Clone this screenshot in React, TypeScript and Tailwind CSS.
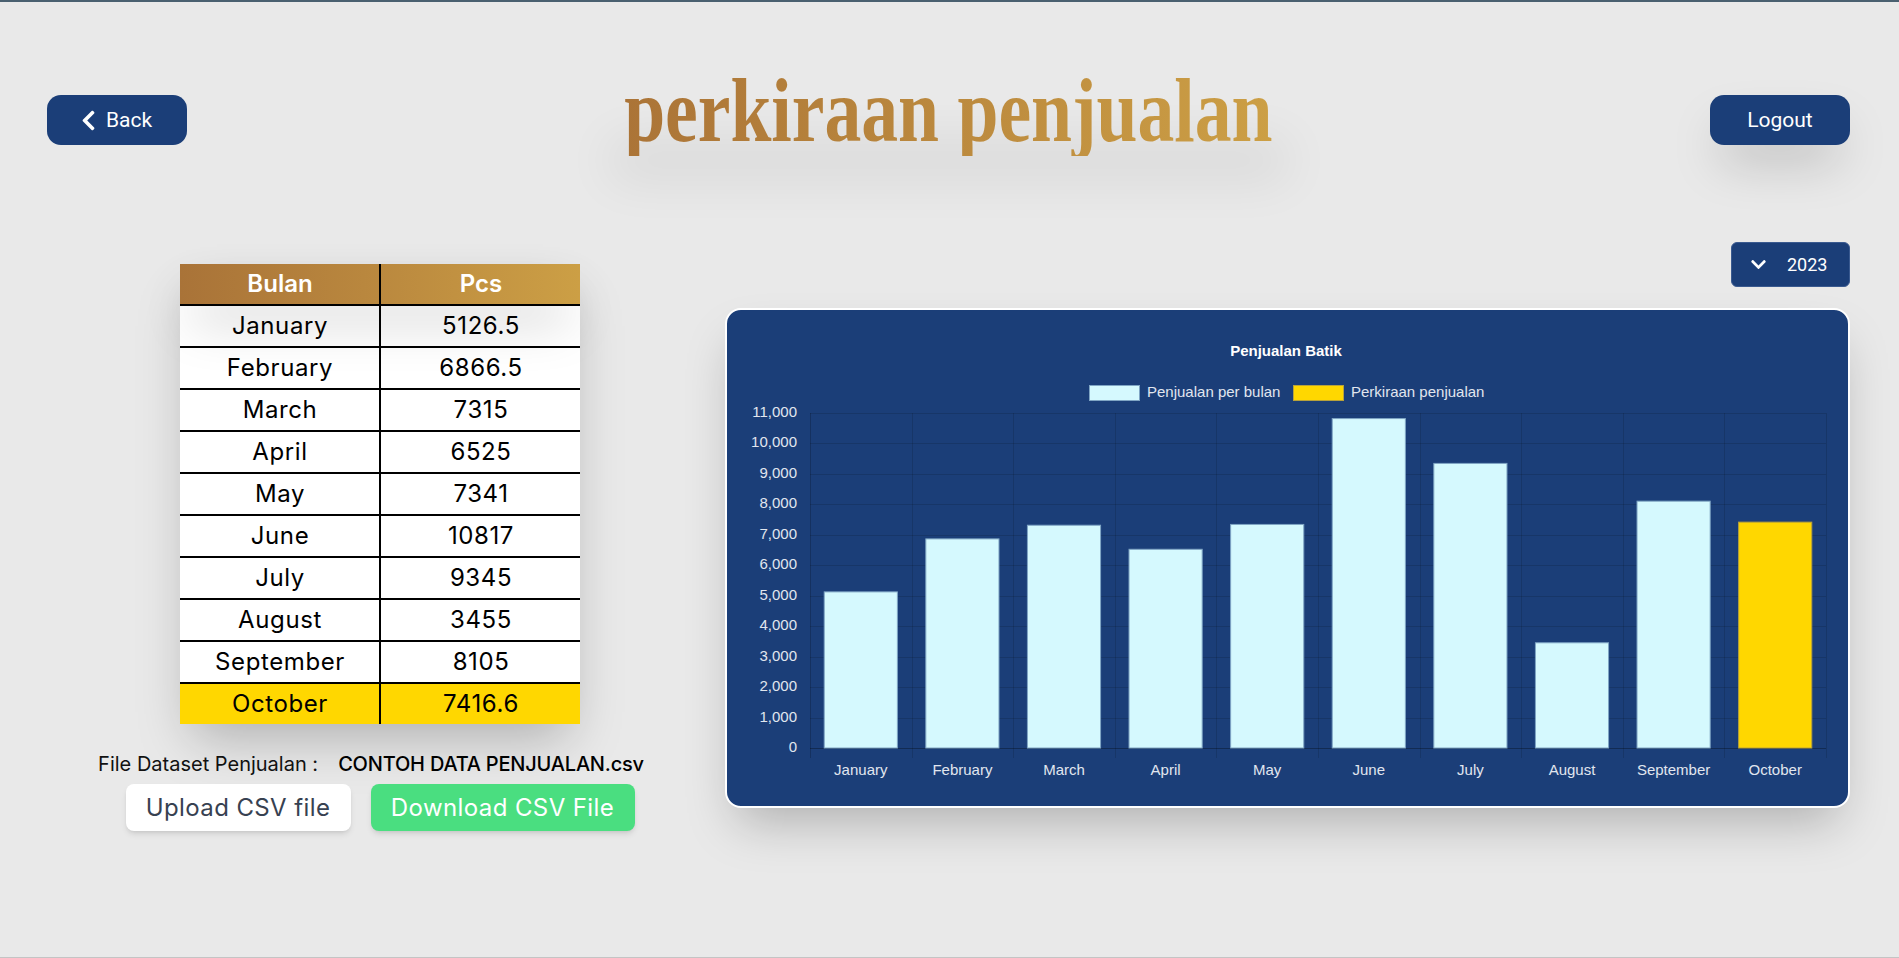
import React from 'react';
import { FaChevronDown, FaChevronLeft } from 'react-icons/fa';

const rows = [
  { month: 'January', pcs: '5126.5', value: 5126.5 },
  { month: 'February', pcs: '6866.5', value: 6866.5 },
  { month: 'March', pcs: '7315', value: 7315 },
  { month: 'April', pcs: '6525', value: 6525 },
  { month: 'May', pcs: '7341', value: 7341 },
  { month: 'June', pcs: '10817', value: 10817 },
  { month: 'July', pcs: '9345', value: 9345 },
  { month: 'August', pcs: '3455', value: 3455 },
  { month: 'September', pcs: '8105', value: 8105 },
  { month: 'October', pcs: '7416.6', value: 7416.6 },
];

// chart geometry, in px inside the panel's white border
const plot = { left: 83, right: 1099, top: 103, bottom: 438 };
const colW = (plot.right - plot.left) / rows.length;
const yOf = (v: number) => plot.bottom - (v / 11000) * (plot.bottom - plot.top);
const ticks = Array.from({ length: 12 }, (_, i) => i * 1000);

const SalesChart: React.FC = () => {
  const grid = 'rgba(0,0,0,0.13)';
  const label = '#e1e6ef';
  const font = '"Liberation Sans", Arial, sans-serif';
  return (
    <svg width="1121" height="496" viewBox="0 0 1121 496" fontFamily={font} className="block">
      <text x="559" y="46" textAnchor="middle" fontSize="15" fontWeight="700" fill="#ffffff">
        Penjualan Batik
      </text>

      <rect x="362.5" y="75.5" width="50" height="15" fill="#d5f9fe" stroke="#7fa5c4" />
      <text x="420" y="87" fontSize="15" fill={label}>Penjualan per bulan</text>
      <rect x="566.5" y="75.5" width="50" height="15" fill="#ffd700" stroke="#b8a23a" />
      <text x="624" y="87" fontSize="15" fill={label}>Perkiraan penjualan</text>

      {ticks.map((t) => (
        <g key={t}>
          <line x1={plot.left} x2={plot.right} y1={Math.round(yOf(t)) + 0.5} y2={Math.round(yOf(t)) + 0.5} stroke={t === 0 ? 'rgba(0,0,0,0.3)' : grid} />
          <text x={70} y={yOf(t) + 4} textAnchor="end" fontSize="15" fill={label}>
            {t.toLocaleString('en-US')}
          </text>
        </g>
      ))}

      {Array.from({ length: rows.length + 1 }, (_, i) => {
        const x = Math.round(plot.left + i * colW) + 0.5;
        return <line key={i} x1={x} x2={x} y1={plot.top} y2={plot.bottom + 10} stroke={i === 0 ? 'rgba(0,0,0,0.2)' : grid} />;
      })}

      {rows.map((r, i) => {
        const w = colW * 0.72;
        const x = plot.left + i * colW + (colW - w) / 2;
        const y = yOf(r.value);
        const forecast = r.month === 'October';
        return (
          <g key={r.month}>
            <rect
              x={x}
              y={y}
              width={w}
              height={plot.bottom - y}
              fill={forecast ? '#ffd700' : '#d5f9fe'}
              stroke={forecast ? '#b8a23a' : '#7fa5c4'}
              strokeWidth="1"
            />
            <text x={x + w / 2} y={plot.bottom + 27} textAnchor="middle" fontSize="15" fill={label}>
              {r.month}
            </text>
          </g>
        );
      })}
    </svg>
  );
};

export default function App() {
  return (
    <div className="h-[958px] overflow-hidden bg-[#e9e9e9] border-t-2 border-b border-t-[#4a6070] border-b-[#c4c4c4] font-['Inter',sans-serif]">
      <header className="flex items-center justify-between pl-[47px] pr-[49px] mt-[93px] h-[50px]">
        <button className="flex items-center justify-center gap-[6px] w-[140px] h-[50px] pr-[5px] pt-px rounded-[14px] bg-[#1b3e78] text-white text-[21px] font-['Roboto',sans-serif]">
          <FaChevronLeft size={23} />
          Back
        </button>
        <div className="relative h-[50px] w-[648px] flex items-center justify-center">
          {/* soft glow under the title, wider than the text box */}
          <div className="absolute inset-x-0 top-0 h-[10px] shadow-[0_60px_50px_15px_rgba(0,0,0,0.07)]" />
          <h1 className="relative whitespace-nowrap -translate-y-[9px] text-[90px] leading-none font-bold bg-gradient-to-r from-[#ab7437] to-[#cc9f45] bg-clip-text text-transparent font-['Liberation_Serif',serif] scale-x-[0.818]">
            perkiraan penjualan
          </h1>
        </div>
        <button className="w-[140px] h-[50px] pt-px rounded-[14px] bg-[#1b3e78] text-white text-[21px] font-['Roboto',sans-serif] shadow-2xl">
          Logout
        </button>
      </header>

      <main className="flex pl-[47px] pr-[49px] mt-[97px]">
        <section className="w-[666px] flex flex-col items-center pt-[22px]">
          <div className="w-[400px] bg-white shadow-2xl text-black text-[24px] tracking-[0.6px]">
            <div className="relative z-10 flex h-[42px] items-center border-b-2 border-black bg-gradient-to-r from-[#a97338] to-[#cc9f45] text-white font-semibold tracking-normal shadow-2xl">
              <div className="w-[201px] h-full pl-px flex items-center justify-center border-r-2 border-black">Bulan</div>
              <div className="flex-1 pl-px text-center">Pcs</div>
            </div>
            {rows.map((r, i) => (
              <div
                key={r.month}
                className={`flex items-center ${i === rows.length - 1 ? 'h-[40px] bg-[#ffd700]' : 'h-[42px] border-b-2 border-black'}`}
              >
                <div className="w-[201px] h-full pl-px flex items-center justify-center border-r-2 border-black">{r.month}</div>
                <div className="flex-1 pl-px text-center">{r.pcs}</div>
              </div>
            ))}
          </div>

          <p className="mt-[27px] mr-[18px] text-[20px] text-[#111] leading-[26px] whitespace-nowrap">
            File Dataset Penjualan :
            <span className="ml-[20px] font-medium tracking-[-0.2px] text-black">CONTOH DATA PENJUALAN.csv</span>
          </p>
          <div className="flex gap-[20px] mt-[7px]">
            <button className="w-[225px] h-[47px] rounded-lg bg-white text-[#374151] text-[24px] tracking-[0.4px] shadow-md">
              Upload CSV file
            </button>
            <button className="w-[264px] h-[47px] rounded-lg bg-[#4ade80] text-white text-[24px] tracking-[0.4px] shadow-md">
              Download CSV File
            </button>
          </div>
        </section>

        <section className="flex-1 flex flex-col items-end">
          <button className="flex items-center gap-[20px] w-[119px] h-[45px] pl-[18px] rounded-md border border-[#3a5a90] bg-[#1b3e78] text-white text-[18px] font-['Roboto',sans-serif]">
            <FaChevronDown size={17} />
            2023
          </button>
          <div className="mt-[21px] w-[1125px] h-[500px] overflow-hidden rounded-[16px] border-2 border-white bg-[#1b3e78] shadow-2xl">
            <SalesChart />
          </div>
        </section>
      </main>
    </div>
  );
}
